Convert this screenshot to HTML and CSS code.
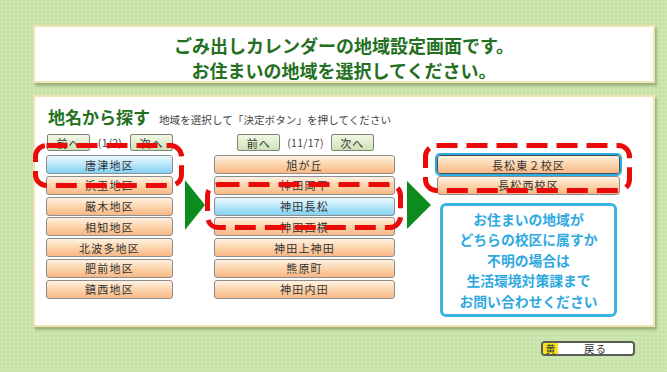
FILE: index.html
```html
<!DOCTYPE html>
<html lang="ja">
<head>
<meta charset="utf-8">
<title>ごみ出しカレンダー 地域設定</title>
<link rel="stylesheet" href="styles.css">
</head>
<body>
<div class="page">
  <div class="header">
    <p>ごみ出しカレンダーの地域設定画面です。</p>
    <p>お住まいの地域を選択してください。</p>
  </div>
  <div class="panel">
    <div class="title-row">
      <h1 class="title">地名から探す</h1>
      <span class="hint">地域を選択して「決定ボタン」を押してください</span>
    </div>
    <div class="cols">
      <div class="col col-left">
        <div class="nav nav-left">
          <span class="nav-btn">前へ</span><span class="count">(1/2)</span><span class="nav-btn">次へ</span>
        </div>
        <ul class="list">
          <li class="item item-sel">唐津地区</li>
          <li class="item">浜玉地区</li>
          <li class="item">厳木地区</li>
          <li class="item">相知地区</li>
          <li class="item">北波多地区</li>
          <li class="item">肥前地区</li>
          <li class="item">鎮西地区</li>
        </ul>
      </div>
      <div class="arrow-cell arrow-cell-1"><span class="arrow"></span></div>
      <div class="col col-mid">
        <div class="nav nav-mid">
          <span class="nav-btn">前へ</span><span class="count">(11/17)</span><span class="nav-btn">次へ</span>
        </div>
        <ul class="list">
          <li class="item">旭が丘</li>
          <li class="item">神田岡平</li>
          <li class="item item-sel">神田長松</li>
          <li class="item">神田西横</li>
          <li class="item">神田上神田</li>
          <li class="item">熊原町</li>
          <li class="item">神田内田</li>
        </ul>
      </div>
      <div class="arrow-cell arrow-cell-2"><span class="arrow arrow-big"></span></div>
      <div class="col col-right">
        <div class="nav-space"></div>
        <ul class="list">
          <li class="item item-focus">長松東２校区</li>
          <li class="item">長松西校区</li>
        </ul>
        <div class="info">
          <p>お住まいの地域が<br>どちらの校区に属すか<br>不明の場合は<br>生活環境対策課まで<br>お問い合わせください</p>
        </div>
      </div>
    </div>
  </div>
  <div class="footer">
    <div class="back"><span class="key">黄</span><span class="back-label">戻る</span></div>
  </div>
  <svg class="marks" width="667" height="372" viewBox="0 0 667 372">
    <rect x="35.5" y="145.5" width="146" height="40" rx="11" />
    <rect x="207.5" y="184.5" width="193" height="43" rx="11" />
    <rect x="425.5" y="145.5" width="204" height="45" rx="11" />
  </svg>
</div>
</body>
</html>
```

FILE: styles.css
```css
* { box-sizing: border-box; }
html, body { margin: 0; padding: 0; }
body {
  width: 667px;
  height: 372px;
  overflow: hidden;
  background: #c7e3aa;
  font-family: "Noto Sans CJK JP", "Noto Sans", sans-serif;
  color: #333;
}
.page {
  position: relative;
  width: 667px;
  height: 372px;
  padding: 25px 0 0 33px;
  background-image: radial-gradient(rgba(255,255,255,0.18) 1px, transparent 1.2px);
  background-size: 4px 4px;
}
.header {
  width: 622px;
  height: 58px;
  background: #fff;
  border: 2px solid #f1e4b6;
  box-shadow: 2px 3px 2px rgba(110, 120, 70, 0.45);
  padding-top: 6px;
  text-align: center;
}
.header p {
  margin: 0;
  font-size: 18px;
  line-height: 25px;
  font-weight: 700;
  color: #237022;
  letter-spacing: 0;
}
.panel {
  position: relative;
  width: 622px;
  height: 232px;
  margin-top: 12px;
  background: #fff;
  border: 2px solid #f1e4b6;
  box-shadow: 2px 3px 2px rgba(110, 120, 70, 0.45);
  padding: 9px 0 0 11px;
}
.title-row {
  display: flex;
  align-items: baseline;
  height: 24px;
}
.title {
  margin: 0 0 0 2px;
  font-size: 17px;
  line-height: 22px;
  font-weight: 700;
  color: #237022;
}
.hint {
  margin-left: 9px;
  font-size: 10.6px;
  color: #444;
  letter-spacing: 0;
}
.cols {
  display: flex;
  margin-top: 4px;
}
.col { display: flex; flex-direction: column; }
.col-left { width: 127px; }
.col-mid { width: 181px; }
.col-right { width: 183px; }
.nav {
  display: flex;
  align-items: center;
  height: 17px;
}
.nav-left { justify-content: space-between; padding-left: 1px; }
.nav-mid { justify-content: center; gap: 7px; padding-left: 2px; }
.nav-space { height: 17px; }
.nav-btn {
  display: flex;
  align-items: center;
  justify-content: center;
  width: 43px;
  height: 17px;
  border: 1px solid #7f8479;
  border-radius: 2px;
  background: linear-gradient(#f1f7e6, #cfe2b6);
  font-size: 11px;
  letter-spacing: 1px;
  color: #333;
}
.count {
  font-size: 10.5px;
  color: #444;
  letter-spacing: 0.3px;
}
.list {
  list-style: none;
  margin: 4px 0 0;
  padding: 0;
  display: flex;
  flex-direction: column;
  gap: 1.8px;
}
.item {
  height: 19px;
  border: 1px solid #8e8e8e;
  border-radius: 3px;
  background: linear-gradient(#fff1e2, #fcd2a8 55%, #f9b886);
  display: flex;
  align-items: center;
  justify-content: center;
  font-size: 11px;
  letter-spacing: 1.2px;
  color: #333;
}
.item-sel {
  background: linear-gradient(#eaf8fe, #b5e4f9 55%, #82d1f4);
}
.item-focus {
  border: 1px solid #4a4a4a;
  outline: 2px solid #29aee6;
  outline-offset: 0;
}
.arrow-cell { display: flex; }
.arrow-cell-1 { width: 41px; padding: 46px 0 0 12px; }
.arrow-cell-2 { width: 42px; padding: 47px 0 0 12px; }
.arrow {
  width: 0;
  height: 0;
  border-left: 20px solid #0d8b1d;
  border-top: 25px solid transparent;
  border-bottom: 25px solid transparent;
}
.arrow-big {
  border-left: 24px solid #0d8b1d;
  border-top: 24px solid transparent;
  border-bottom: 24px solid transparent;
}
.info {
  margin: 8px 3px 0;
  height: 114px;
  border: 3px solid #3db3e3;
  border-radius: 6px;
  background: #fff;
  display: flex;
  align-items: center;
  justify-content: center;
}
.info p {
  margin: 0;
  text-align: center;
  font-size: 13.8px;
  line-height: 20.5px;
  font-weight: 700;
  color: #2ea9df;
}
.footer {
  width: 622px;
  display: flex;
  justify-content: flex-end;
  padding-right: 20px;
  margin-top: 14px;
}
.back {
  display: flex;
  align-items: center;
  width: 94px;
  height: 15px;
  border: 2px solid #5a5a5a;
  border-radius: 4px;
  background: #fff;
  overflow: hidden;
}
.key {
  width: 15px;
  height: 100%;
  background: #f6e51a;
  font-size: 10px;
  line-height: 11px;
  text-align: center;
  color: #333;
}
.back-label {
  flex: 1;
  text-align: center;
  font-size: 10.5px;
  line-height: 11px;
  letter-spacing: 1px;
  color: #333;
}
.marks {
  position: absolute;
  left: 0;
  top: 0;
  pointer-events: none;
}
.marks rect {
  fill: none;
  stroke: #ea0a0a;
  stroke-width: 5;
  stroke-dasharray: 21 9;
}
```
